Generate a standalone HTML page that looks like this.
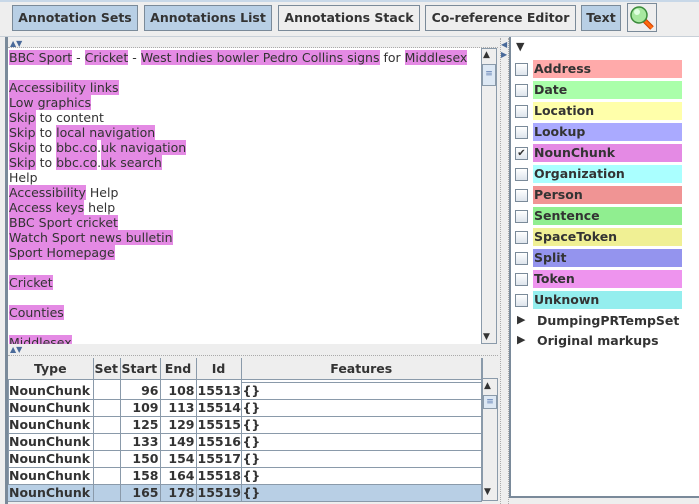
<!DOCTYPE html>
<html><head><style>
*{margin:0;padding:0;box-sizing:border-box}
body{width:699px;height:504px;overflow:hidden;background:#eeeeee;font-family:"DejaVu Sans","Liberation Sans",sans-serif;position:relative;color:#333}
.a{position:absolute}
.btn{position:absolute;top:5px;height:26px;border:1px solid #7a8a99;font-weight:bold;font-size:12.5px;line-height:24px;text-align:center;color:#333;background:#eeeeee}
.sel{background:#b8cfe5}
.txt{font-size:12.5px;line-height:15px;white-space:pre}
.h{background:#e48ae4}
.tbl td{border-right:1px solid #8a9aaa;border-bottom:1px solid #8a9aaa;height:17px;font-weight:bold;font-size:12.5px;padding:0 1px;white-space:nowrap;overflow:hidden}
.tbl{border-collapse:collapse;position:absolute;table-layout:fixed}
.r{text-align:right}
.it{position:absolute;left:515px;height:18px}
.cb{position:absolute;left:0;top:3px;width:13px;height:13px;border:1px solid #7a8a99;background:linear-gradient(#fff,#dde4ec)}
.lb{position:absolute;left:18px;top:0;width:149px;height:18px;font-weight:bold;font-size:12.5px;line-height:18px;padding-left:1px}
</style></head><body>
<div class="a" style="left:0;top:0;width:699px;height:2px;background:#c8d8e8"></div>
<div class="btn sel" style="left:12px;width:126px">Annotation Sets</div>
<div class="btn sel" style="left:144px;width:128px">Annotations List</div>
<div class="btn" style="left:278px;width:142px">Annotations Stack</div>
<div class="btn" style="left:425px;width:151px">Co-reference Editor</div>
<div class="btn sel" style="left:581px;width:40px">Text</div>
<div class="btn" style="left:627px;width:30px;top:3px;height:29px">
<svg width="28" height="27" viewBox="0 0 28 27"><line x1="16" y1="16" x2="24" y2="24" stroke="#d04000" stroke-width="5"/><line x1="16" y1="16" x2="24" y2="24" stroke="#ff6a10" stroke-width="3"/><circle cx="11" cy="11" r="8" fill="#a8e8a0" stroke="#3a8a3a" stroke-width="1.5"/><circle cx="9" cy="8" r="3" fill="#e0ffe0"/></svg></div>
<div class="a" style="left:0;top:36px;width:699px;height:1px;background:#c8d0d8"></div>
<div class="a" style="left:5px;top:37px;width:3px;height:467px;background:#7a8a9a"></div>
<div class="a" style="left:8px;top:38px;width:490px;height:10px;background:#eee;border-bottom:1px dotted #aaa"></div>
<div class="a" style="left:10px;top:39px;font-size:8px;color:#4a6a9a">▲▼</div>
<div class="a" style="left:8px;top:48px;width:473px;height:296px;background:#fff;overflow:hidden">
<div class="txt" style="padding:2px 0 0 1px"><span class="h">BBC Sport</span> - <span class="h">Cricket</span> - <span class="h">West Indies bowler Pedro Collins signs</span> for <span class="h">Middlesex</span>

<span class="h">Accessibility links</span>
<span class="h">Low graphics</span>
<span class="h">Skip</span> to content
<span class="h">Skip</span> to <span class="h">local navigation</span>
<span class="h">Skip</span> to <span class="h">bbc.co</span>.<span class="h">uk navigation</span>
<span class="h">Skip</span> to <span class="h">bbc.co</span>.<span class="h">uk search</span>
Help
<span class="h">Accessibility</span> Help
<span class="h">Access keys</span> help
<span class="h">BBC Sport cricket</span>
<span class="h">Watch Sport news bulletin</span>
<span class="h">Sport Homepage</span>

<span class="h">Cricket</span>

<span class="h">Counties</span>

<span class="h">Middlesex</span></div></div>
<div class="a" style="left:481px;top:48px;width:16px;height:296px;background:#eeeeee;border:1px solid #8a9aaa"></div>
<div class="a" style="left:483px;top:50px;font-size:9px">▲</div>
<div class="a" style="left:482px;top:64px;width:14px;height:22px;background:#dde8f4;border:1px solid #8a9aaa;color:#5a7ab0;font-size:9px;text-align:center;line-height:18px">≡</div>
<div class="a" style="left:483px;top:332px;font-size:9px">▼</div>
<div class="a" style="left:8px;top:346px;width:490px;height:10px;border-bottom:1px dotted #aaa"></div>
<div class="a" style="left:10px;top:345px;font-size:8px;color:#4a6a9a">▲▼</div>
<div class="a" style="left:8px;top:358px;width:475px;height:142px;background:#fff;border:1px solid #8a9aaa"></div>
<table class="tbl" style="left:8px;top:358px;width:474px">
<colgroup><col style="width:85px"><col style="width:27px"><col style="width:40px"><col style="width:36px"><col style="width:45px"><col></colgroup>
<tr style="background:#eeeeee"><td style="text-align:center;height:21px">Type</td><td>Set</td><td>Start</td><td style="text-align:center">End</td><td style="text-align:center">Id</td><td style="text-align:center">Features</td></tr>
<tr><td style="height:3px;border-bottom:none"></td><td style="height:3px;border-bottom:none"></td><td style="height:3px;border-bottom:none"></td><td style="height:3px;border-bottom:none"></td><td style="height:3px;border-bottom:none"></td><td style="height:3px"></td></tr>
<tr><td>NounChunk</td><td></td><td class="r">96</td><td class="r">108</td><td>15513</td><td>{}</td></tr>
<tr><td>NounChunk</td><td></td><td class="r">109</td><td class="r">113</td><td>15514</td><td>{}</td></tr>
<tr><td>NounChunk</td><td></td><td class="r">125</td><td class="r">129</td><td>15515</td><td>{}</td></tr>
<tr><td>NounChunk</td><td></td><td class="r">133</td><td class="r">149</td><td>15516</td><td>{}</td></tr>
<tr><td>NounChunk</td><td></td><td class="r">150</td><td class="r">154</td><td>15517</td><td>{}</td></tr>
<tr><td>NounChunk</td><td></td><td class="r">158</td><td class="r">164</td><td>15518</td><td>{}</td></tr>
<tr style="background:#b8cfe5"><td>NounChunk</td><td></td><td class="r">165</td><td class="r">178</td><td>15519</td><td>{}</td></tr>
</table>
<div class="a" style="left:482px;top:378px;width:16px;height:123px;background:#eeeeee;border:1px solid #8a9aaa"></div>
<div class="a" style="left:484px;top:381px;font-size:9px">▲</div>
<div class="a" style="left:483px;top:395px;width:14px;height:14px;background:#dde8f4;border:1px solid #8a9aaa;color:#5a7ab0;font-size:9px;text-align:center;line-height:12px">≡</div>
<div class="a" style="left:484px;top:487px;font-size:9px">▼</div>
<div class="a" style="left:500px;top:38px;width:9px;height:466px;border-left:1px dotted #aaa;border-right:1px dotted #aaa"></div>
<div class="a" style="left:501px;top:40px;font-size:8px;color:#4a6a9a;line-height:10px">◀<br>▶</div>
<div class="a" style="left:509px;top:37px;width:190px;height:460px;background:#fff;border-left:2px solid #7a8a9a"></div>
<div class="a" style="left:509px;top:496px;width:190px;height:8px;border-top:2px solid #7a8a9a;background:#eee"></div>
<div class="a" style="left:516px;top:40px;font-size:11px">▼</div>
<div class="it" style="top:60px"><div class="cb"></div><div class="lb" style="background:#ffaaaa">Address</div></div>
<div class="it" style="top:81px"><div class="cb"></div><div class="lb" style="background:#aaffaa">Date</div></div>
<div class="it" style="top:102px"><div class="cb"></div><div class="lb" style="background:#ffffaa">Location</div></div>
<div class="it" style="top:123px"><div class="cb"></div><div class="lb" style="background:#aaaaff">Lookup</div></div>
<div class="it" style="top:144px"><div class="cb" style="font-size:10px;line-height:11px;text-align:center">✔</div><div class="lb" style="background:#e48ae4">NounChunk</div></div>
<div class="it" style="top:165px"><div class="cb"></div><div class="lb" style="background:#aaffff">Organization</div></div>
<div class="it" style="top:186px"><div class="cb"></div><div class="lb" style="background:#f09494">Person</div></div>
<div class="it" style="top:207px"><div class="cb"></div><div class="lb" style="background:#90ee90">Sentence</div></div>
<div class="it" style="top:228px"><div class="cb"></div><div class="lb" style="background:#f0f094">SpaceToken</div></div>
<div class="it" style="top:249px"><div class="cb"></div><div class="lb" style="background:#9494ee">Split</div></div>
<div class="it" style="top:270px"><div class="cb"></div><div class="lb" style="background:#ee94ee">Token</div></div>
<div class="it" style="top:291px"><div class="cb"></div><div class="lb" style="background:#94eeee">Unknown</div></div>
<div class="a" style="left:517px;top:313px;font-size:11px">▶</div>
<div class="a" style="left:537px;top:313px;font-weight:bold;font-size:12.5px">DumpingPRTempSet</div>
<div class="a" style="left:517px;top:333px;font-size:11px">▶</div>
<div class="a" style="left:537px;top:333px;font-weight:bold;font-size:12.5px">Original markups</div>
</body></html>
